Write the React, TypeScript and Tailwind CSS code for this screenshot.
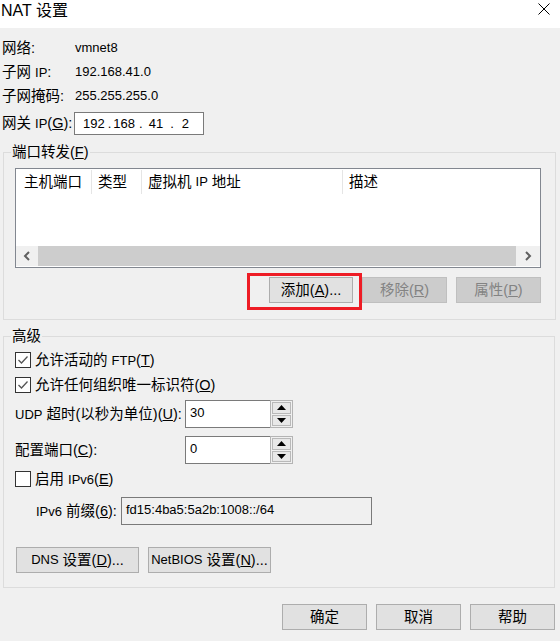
import React from "react";

function Btn({
  children,
  disabled,
  w,
}: {
  children: React.ReactNode;
  disabled?: boolean;
  w: string;
}) {
  return (
    <div
      className={`${w} h-[26px] flex items-center justify-center border ${
        disabled
          ? "bg-[#cccccc] border-[#bfbfbf] text-[#838383]"
          : "bg-[#e1e1e1] border-[#adadad] text-black"
      }`}
    >
      {children}
    </div>
  );
}

function Check({ checked }: { checked?: boolean }) {
  return (
    <div className="w-[16px] h-[16px] border border-[#333333] bg-white flex items-center justify-center shrink-0">
      {checked && (
        <svg width="12" height="10" viewBox="0 0 12 10">
          <polyline points="1.5,5 4.5,8 10.5,1.5" fill="none" stroke="#555" strokeWidth="1.3" />
        </svg>
      )}
    </div>
  );
}

function Spinner() {
  return (
    <div className="w-[23px] h-[28px] border border-[#b4b4b4] bg-[#f0f0f0] p-[1px] flex flex-col gap-[1px]">
      <div className="flex-1 border border-[#b9b9b9] bg-[#e8e8e8] flex items-center justify-center">
        <svg width="9" height="5" viewBox="0 0 9 5">
          <polygon points="4.5,0 9,5 0,5" fill="#000" />
        </svg>
      </div>
      <div className="flex-1 border border-[#b9b9b9] bg-[#e8e8e8] flex items-center justify-center">
        <svg width="9" height="5" viewBox="0 0 9 5">
          <polygon points="0,0 9,0 4.5,5" fill="#000" />
        </svg>
      </div>
    </div>
  );
}

const U = ({ c }: { c: string }) => <span className="underline">{c}</span>;
// latin runs are a touch smaller than the CJK glyphs in the original
const L = ({ children }: { children: React.ReactNode }) => (
  <span className="text-[13px]">{children}</span>
);

export default function App() {
  return (
    <div className="w-[560px] h-[641px] bg-[#f0f0f0] flex flex-col text-[14.5px] leading-[18px] text-black font-['Liberation_Sans','Noto_Sans_CJK_SC',sans-serif]">
      {/* Title bar */}
      <div className="h-[28px] bg-white flex items-start justify-between shrink-0">
        <div className="pl-[1px] pt-[1px] text-[16px] leading-[20px]">NAT 设置</div>
        <svg className="mr-[10px] mt-[3px]" width="12" height="12" viewBox="0 0 12 12">
          <path d="M0.5 0.5 L11.5 11.5 M11.5 0.5 L0.5 11.5" stroke="#000" strokeWidth="1" />
        </svg>
      </div>

      {/* Info rows */}
      <div className="flex flex-col pt-[8px]">
        <div className="h-[24px] flex items-center">
          <div className="w-[75px] pl-[2px]">网络:</div>
          <L>vmnet8</L>
        </div>
        <div className="h-[24px] flex items-center">
          <div className="w-[75px] pl-[2px]">
            子网 <L>IP</L>:
          </div>
          <L>192.168.41.0</L>
        </div>
        <div className="h-[24px] flex items-center">
          <div className="w-[75px] pl-[2px]">子网掩码:</div>
          <L>255.255.255.0</L>
        </div>
        <div className="mt-[4px] h-[23px] flex items-center">
          <div className="w-[74px] pl-[2px] whitespace-nowrap">
            网关 <L>IP</L>(<U c="G" />):
          </div>
          <div className="w-[130px] h-[23px] border border-[#7a7a7a] bg-white flex items-center pl-[8px] text-[13px]">
            <span>192</span>
            <span className="ml-[3px]">.</span>
            <span className="ml-[2px]">168</span>
            <span className="ml-[4px]">.</span>
            <span className="ml-[6px]">41</span>
            <span className="ml-[7px]">.</span>
            <span className="ml-[8px]">2</span>
          </div>
        </div>
      </div>

      {/* Port forwarding */}
      <div className="mt-[17px] ml-[3px] w-[553px] h-[168px] border border-[#dcdcdc] relative shrink-0">
        <div className="absolute top-[-10px] left-[7px] bg-[#f0f0f0] px-[1px]">
          端口转发(<U c="F" />)
        </div>
        <div className="ml-[11px] mt-[15px] w-[526px] h-[100px] border border-[#828790] bg-white flex flex-col">
          <div className="h-[26px] flex items-center">
            <div className="w-[76px] h-[24px] pl-[8px] border-r border-[#e5e5e5] flex items-center">主机端口</div>
            <div className="w-[50px] h-[24px] pl-[6px] border-r border-[#e5e5e5] flex items-center">类型</div>
            <div className="w-[201px] h-[24px] pl-[6px] border-r border-[#e5e5e5] flex items-center">
              虚拟机&nbsp;<L>IP</L>&nbsp;地址
            </div>
            <div className="flex-1 h-[24px] pl-[6px] flex items-center">描述</div>
          </div>
          <div className="flex-1" />
          <div className="h-[20px] flex mb-[1px]">
            <div className="w-[22px] bg-[#f0f0f0] flex items-center justify-center">
              <svg width="8" height="10" viewBox="0 0 8 10">
                <polyline points="6,1 2,5 6,9" fill="none" stroke="#606060" strokeWidth="2" />
              </svg>
            </div>
            <div className="flex-1 bg-[#cdcdcd]" />
            <div className="w-[24px] bg-[#f0f0f0] flex items-center justify-center">
              <svg width="8" height="10" viewBox="0 0 8 10">
                <polyline points="2,1 6,5 2,9" fill="none" stroke="#606060" strokeWidth="2" />
              </svg>
            </div>
          </div>
        </div>
        <div className="mt-[9px] pr-[14px] flex justify-end gap-[9px]">
          <div className="relative">
            <Btn w="w-[84px]">
              添加(<U c="A" />)...
            </Btn>
            <div className="absolute left-[-22px] right-[-9px] top-[-4px] bottom-[-7px] border-[3px] border-[#ee1c25]" />
          </div>
          <Btn w="w-[85px]" disabled>
            移除(<U c="R" />)
          </Btn>
          <Btn w="w-[85px]" disabled>
            属性(<U c="P" />)
          </Btn>
        </div>
      </div>

      {/* Advanced */}
      <div className="mt-[16px] ml-[3px] w-[552px] h-[252px] border border-[#dcdcdc] relative shrink-0">
        <div className="absolute top-[-10px] left-[7px] bg-[#f0f0f0] px-[1px]">高级</div>
        <div className="pl-[11px] pt-[15px] flex flex-col">
          <div className="h-[16px] flex items-center gap-[4px]">
            <Check checked />
            <div>
              允许活动的 <L>FTP</L>(<U c="T" />)
            </div>
          </div>
          <div className="mt-[9px] h-[16px] flex items-center gap-[4px]">
            <Check checked />
            <div>
              允许任何组织唯一标识符(<U c="O" />)
            </div>
          </div>
          <div className="mt-[7px] h-[28px] flex items-center">
            <div className="w-[170px] whitespace-nowrap">
              <L>UDP</L> 超时(以秒为单位)(<U c="U" />):
            </div>
            <div className="w-[85px] h-[28px] border border-[#7a7a7a] border-r-0 bg-white pl-[4px] pt-[3px] text-[13px]">30</div>
            <Spinner />
          </div>
          <div className="mt-[8px] h-[28px] flex items-center">
            <div className="w-[170px]">
              配置端口(<U c="C" />):
            </div>
            <div className="w-[85px] h-[28px] border border-[#7a7a7a] border-r-0 bg-white pl-[4px] pt-[3px] text-[13px]">0</div>
            <Spinner />
          </div>
          <div className="mt-[7px] h-[16px] flex items-center gap-[4px]">
            <Check />
            <div>
              启用 <L>IPv6</L>(<U c="E" />)
            </div>
          </div>
          <div className="mt-[10px] h-[28px] pl-[21px] flex items-center">
            <div className="w-[85px] whitespace-nowrap">
              <L>IPv6</L> 前缀(<U c="6" />):
            </div>
            <div className="w-[251px] h-[28px] border border-[#7a7a7a] bg-[#f0f0f0] pl-[4px] pt-[3px] text-[13px]">
              fd15:4ba5:5a2b:1008::/64
            </div>
          </div>
          <div className="mt-[22px] ml-[1px] flex gap-[9px]">
            <Btn w="w-[123px]">
              <L>DNS</L>&nbsp;设置(<U c="D" />)...
            </Btn>
            <Btn w="w-[123px]">
              <L>NetBIOS</L>&nbsp;设置(<U c="N" />)...
            </Btn>
          </div>
        </div>
      </div>

      {/* Dialog buttons */}
      <div className="mt-[16px] pr-[5px] flex justify-end gap-[9px]">
        <Btn w="w-[85px]">确定</Btn>
        <Btn w="w-[85px]">取消</Btn>
        <Btn w="w-[85px]">帮助</Btn>
      </div>
    </div>
  );
}
